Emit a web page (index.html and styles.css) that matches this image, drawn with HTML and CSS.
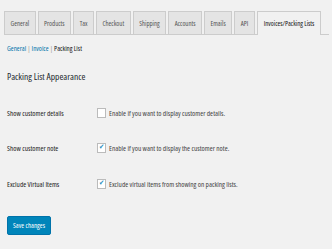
FILE: index.html
```html
<!DOCTYPE html>
<html lang="en">
  <head>
    <meta charset="UTF-8" />
    <title>Invoices/Packing Lists</title>
    <link rel="stylesheet" href="styles.css">
  </head>
  <body>
    <div id="wrap">
      <nav class="tabs">
        <a class="tab">General</a>
        <a class="tab">Products</a>
        <a class="tab">Tax</a>
        <a class="tab">Checkout</a>
        <a class="tab">Shipping</a>
        <a class="tab">Accounts</a>
        <a class="tab">Emails</a>
        <a class="tab">API</a>
        <a class="tab active">Invoices/Packing Lists</a>
      </nav>
      <div class="subnav">
        <a class="sublink">General</a> | <a class="sublink">Invoice</a> | <span class="current">Packing List</span>
      </div>
      <h2 class="section-title">Packing List Appearance</h2>
      <table class="form-table">
        <tr>
          <th>Show customer details</th>
          <td><label><span class="check"></span>Enable if you want to display customer details.</label></td>
        </tr>
        <tr>
          <th>Show customer note</th>
          <td><label><span class="check on"></span>Enable if you want to display the customer note.</label></td>
        </tr>
        <tr>
          <th>Exclude Virtual Items</th>
          <td><label><span class="check on"></span>Exclude virtual items from showing on packing lists.</label></td>
        </tr>
      </table>
      <button class="save">Save changes</button>
    </div>
  </body>
</html>
```

FILE: styles.css
```css
body {
  margin: 0;
  background-color: #f1f1f1;
  font-family: "Open Sans", "DejaVu Sans Condensed", sans-serif;
  font-stretch: condensed;
  font-size: 7.3px;
  color: #333;
}
#wrap {
  padding: 11px 3px 0 4px;
}
.tabs {
  display: flex;
  gap: 2px;
  height: 23px;
  border-bottom: 1px solid #ccc;
}
.tab {
  display: flex;
  align-items: center;
  padding: 0 5.5px;
  background-color: #e4e4e4;
  border: 1px solid #ccc;
  border-bottom: none;
  color: #555;
  font-size: 6.8px;
  white-space: nowrap;
}
.tab.active {
  background-color: #f1f1f1;
  color: #111;
  margin-bottom: -1px;
  padding: 0 6px;
}
.subnav {
  margin: 9px 0 0 3px;
  color: #999;
  font-size: 7px;
}
.sublink {
  color: #0073aa;
}
.current {
  color: #111;
}
.section-title {
  margin: 17px 0 0 3px;
  font-size: 9.5px;
  font-weight: normal;
  color: #23282d;
}
.form-table {
  margin: 12px 0 0 3px;
  border-collapse: collapse;
}
.form-table th {
  width: 90px;
  padding: 0;
  height: 35.5px;
  text-align: left;
  font-weight: normal;
  color: #222;
}
.form-table td {
  padding: 0;
}
.form-table label {
  display: flex;
  align-items: center;
  gap: 3px;
  color: #444;
}
.check {
  width: 7px;
  height: 8px;
  border: 1px solid #bbb;
  background-color: #fff;
  position: relative;
}
.check.on::after {
  content: "✔";
  position: absolute;
  left: 1px;
  top: -1px;
  font-family: "DejaVu Sans", sans-serif;
  font-size: 7px;
  color: #1e8cbe;
}
.save {
  margin: 14px 0 0 3px;
  padding: 0 5px;
  height: 19px;
  border: 1px solid #0073aa;
  border-radius: 2px;
  background-color: #0085ba;
  color: #fff;
  font-family: inherit;
  font-stretch: condensed;
  font-size: 7px;
}
```
